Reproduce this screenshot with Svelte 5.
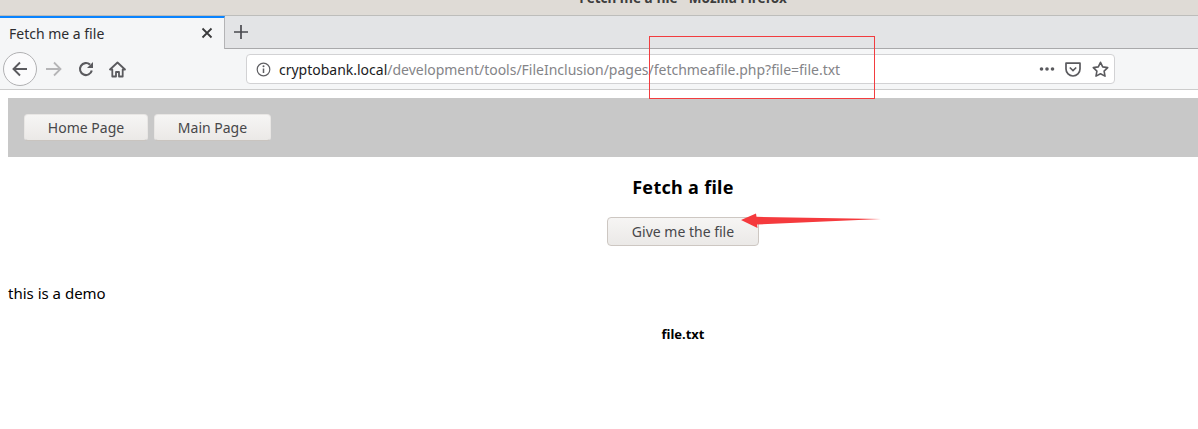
<script>
  const navItems = ['Home Page', 'Main Page'];
</script>

<div class="screen">
  <header class="titlebar"><span>Fetch me a file - Mozilla Firefox</span></header>

  <div class="tabstrip">
    <div class="tab">
      <span class="tab-title">Fetch me a file</span>
      <svg class="tab-close" width="12" height="12" viewBox="0 0 12 12"><path d="M1.500 1.500l9 9M10.500 1.500l-9 9" stroke="#3a3a3c" stroke-width="1.800" fill="none"/></svg>
    </div>
    <div class="newtab">
      <svg width="16" height="16" viewBox="0 0 16 16"><path d="M8 1v14M1 8h14" stroke="#4a4a4f" stroke-width="1.700" fill="none"/></svg>
    </div>
  </div>

  <div class="toolbar">
    <div class="back">
      <svg width="18" height="18" viewBox="0 0 18 18"><path d="M16 9H3M9 2.500L2.500 9 9 15.500" stroke="#5a5a5e" stroke-width="1.900" fill="none"/></svg>
    </div>
    <svg class="forward" width="18" height="18" viewBox="0 0 18 18"><path d="M1 9h14M9 2.500L15.500 9 9 15.500" stroke="#b5b5b7" stroke-width="1.800" fill="none"/></svg>
    <svg class="reload" width="16" height="16" viewBox="0 0 16 16"><path d="M13.800 9.500A6 6 0 1 1 12 3.600" stroke="#5a5a5e" stroke-width="2.100" fill="none"/><path d="M15 1v6H9z" fill="#5a5a5e"/></svg>
    <svg class="home" width="17" height="17" viewBox="0 0 17 17"><path d="M8.500 1.500L1 8.500h2.300V15.500h3.700V11h3v4.500h3.700V8.500H16z" stroke="#5a5a5e" stroke-width="1.800" fill="none" stroke-linejoin="round"/></svg>

    <div class="urlbar">
      <svg class="info" width="15" height="15" viewBox="0 0 15 15"><circle cx="7.500" cy="7.500" r="6.300" stroke="#5f5f63" stroke-width="1.200" fill="none"/><path d="M7.500 6.500v4.500" stroke="#5f5f63" stroke-width="1.500"/><circle cx="7.500" cy="4.300" r="1" fill="#5f5f63"/></svg>
      <span class="url"><span class="host">cryptobank.local</span>/development/tools/FileInclusion/pages/fetchmeafile.php?file=file.txt</span>
      <span class="url-actions">
        <svg width="16" height="6" viewBox="0 0 16 6"><circle cx="2.500" cy="3" r="1.800" fill="#5a5a5e"/><circle cx="8" cy="3" r="1.800" fill="#5a5a5e"/><circle cx="13.500" cy="3" r="1.800" fill="#5a5a5e"/></svg>
        <svg class="pocket" width="16" height="15" viewBox="0 0 16 15"><path d="M1 1.200h14v5.800a7 7 0 0 1-14 0z" stroke="#5a5a5e" stroke-width="1.700" fill="none" stroke-linejoin="round"/><path d="M4.800 5.500L8 8.500l3.200-3" stroke="#5a5a5e" stroke-width="1.700" fill="none"/></svg>
        <svg class="star" width="17" height="16" viewBox="0 0 17 16"><path d="M8.500 1.300l2.200 4.600 5 .7-3.600 3.500.9 5-4.500-2.400L4 15.100l.9-5L1.300 6.600l5-.7z" stroke="#5a5a5e" stroke-width="1.600" fill="none" stroke-linejoin="round"/></svg>
      </span>
    </div>
  </div>

  <main class="page">
    <nav class="pagenav">
      {#each navItems as item}
        <button class="btn nav-btn">{item}</button>
      {/each}
    </nav>
    <section class="center">
      <h1>Fetch a file</h1>
      <button class="btn give">Give me the file</button>
    </section>
    <p class="demo">this is a demo</p>
    <div class="center"><strong class="fname">file.txt</strong></div>
  </main>

  <div class="redbox"></div>
  <svg class="arrow" width="142" height="18" viewBox="0 0 142 18"><path d="M0 7L15 0.500 15.500 3.800 140 6 16 11.500 16.500 15z" fill="#f53a3d"/></svg>
</div>

<style>
  :global(body) { margin: 0; background: #fff; }
  .screen {
    position: relative;
    width: 1198px;
    height: 429px;
    overflow: hidden;
    font-family: "Noto Sans", "Open Sans", sans-serif;
  }
  .titlebar {
    height: 15px;
    background: #dfdbd6;
    border-bottom: 1px solid #bdbdbb;
    overflow: hidden;
    text-align: center;
    padding-left: 168px;
  }
  .titlebar span {
    display: block;
    margin-top: -12px;
    line-height: 20px;
    font-size: 13.500px;
    font-weight: 700;
    color: #3d3d3d;
  }
  .tabstrip {
    display: flex;
    height: 32px;
    background: #e3e4e6;
    border-bottom: 1px solid #a9a9ab;
  }
  .tab {
    width: 225px;
    height: 33px;
    box-sizing: border-box;
    background: #f5f6f7;
    border-top: 2px solid #0a84ff;
    border-right: 1px solid #b4b4b6;
    display: flex;
    align-items: center;
    justify-content: space-between;
    padding: 0 11px 1px 9px;
  }
  .tab-title { font-size: 14px; color: #2d2d30; }
  .newtab { width: 32px; display: flex; align-items: center; justify-content: center; padding-bottom: 1px; }
  .toolbar {
    height: 40px;
    background: #f5f6f7;
    border-bottom: 1px solid #ccc;
    display: flex;
    align-items: center;
    padding-left: 3px;
  }
  .back {
    width: 32px;
    height: 32px;
    border: 1px solid #b1b1b3;
    border-radius: 50%;
    background: #fbfbfc;
    display: flex;
    align-items: center;
    justify-content: center;
    flex: none;
  }
  .forward { margin-left: 8px; }
  .reload { margin-left: 15px; }
  .home { margin-left: 15px; }
  .urlbar {
    margin-left: 120px;
    width: 869px;
    height: 30px;
    box-sizing: border-box;
    background: #fff;
    border: 1px solid #d2d2d4;
    border-radius: 4px;
    display: flex;
    align-items: center;
    padding: 0 5px 0 9px;
  }
  .url { margin-left: 8px; font-size: 14px; letter-spacing: -0.010px; color: #848488; white-space: nowrap; }
  .host { color: #1b1b1d; }
  .url-actions { margin-left: auto; display: flex; align-items: center; gap: 10px; }
  .star { margin-left: 1px; }
  .page { padding: 8px 0 0 8px; }
  .pagenav {
    height: 59px;
    background: #c8c8c8;
    display: flex;
    align-items: center;
    gap: 6px;
    padding-left: 16px;
  }
  .btn {
    font-family: inherit;
    font-size: 14px;
    color: #47474a;
    background: linear-gradient(#f6f5f4, #ebe9e7);
    border: 1px solid #cdc7c2;
    border-radius: 4px;
    padding: 0;
  }
  .nav-btn { height: 27px; border-color: #e8e6e4 #e8e6e4 #c9c4bf; }
  .nav-btn:first-child { width: 124px; }
  .nav-btn:last-child { width: 117px; }
  .center { padding-left: 160px; text-align: center; }
  h1 {
    margin: 18px 0 0;
    font-size: 18px;
    line-height: 25px;
    font-weight: 700;
    letter-spacing: 0.300px;
    color: #000;
  }
  .give { width: 152px; height: 29px; margin-top: 17px; display: inline-block; vertical-align: top; }
  .demo { margin: 36px 0 0; font-size: 15px; line-height: 22px; color: #000; }
  .fname { display: block; margin-top: 20px; font-size: 13px; line-height: 20px; color: #000; }
  .redbox {
    position: absolute;
    left: 649px;
    top: 36px;
    width: 226px;
    height: 63px;
    box-sizing: border-box;
    border: 1px solid #f23c3f;
  }
  .arrow { position: absolute; left: 741px; top: 213px; }
</style>
